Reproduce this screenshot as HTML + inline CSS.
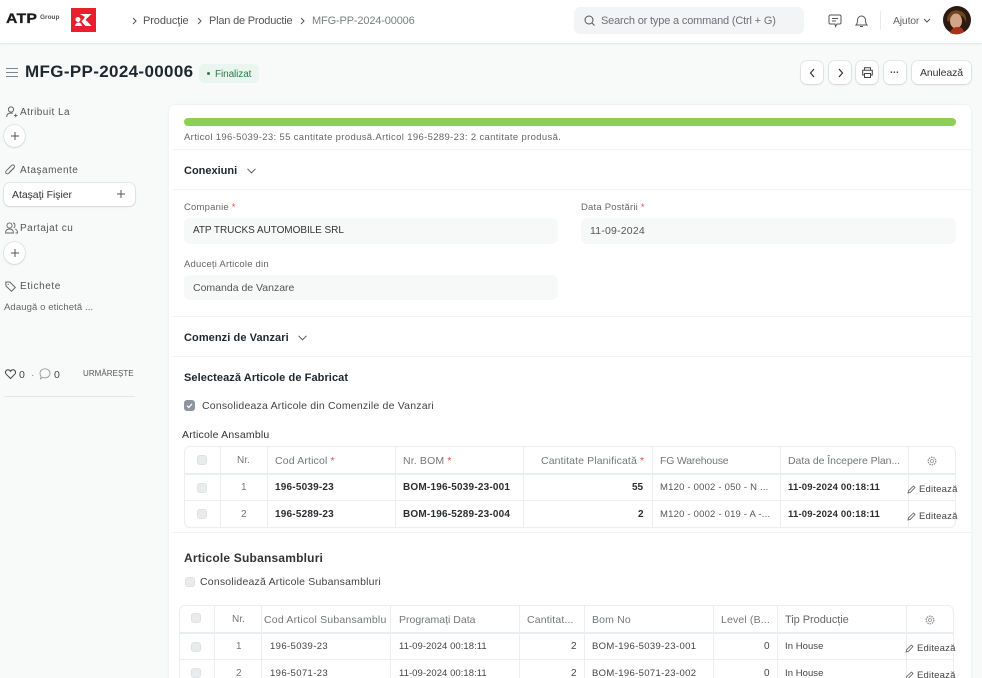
<!DOCTYPE html>
<html><head><meta charset="utf-8">
<style>
html,body{margin:0;padding:0;width:982px;height:678px;overflow:hidden;background:#f8f9f9}
#p{position:absolute;left:0;top:0;width:982px;height:678px;overflow:hidden;background:#f8f9f9;font-family:"Liberation Sans",sans-serif;color:#383838;font-size:11px}
.t{position:absolute;white-space:nowrap;line-height:14px;transform:translateY(1px)}
.b{position:absolute;box-sizing:border-box}
svg{position:absolute;overflow:visible;fill:none}
.btn{position:absolute;box-sizing:border-box;background:#fff;border-radius:6px;box-shadow:0 0 0 1px rgba(0,0,0,.07),0 1px 2px rgba(0,0,0,.08)}
.input{position:absolute;background:#f7f8f8;border-radius:6px;box-sizing:border-box}
.line{position:absolute;height:1px;background:#f1f3f4}
.vl{position:absolute;width:1px;background:#ebeef0}
.hl{position:absolute;height:1px;background:#ebeef0}
.cb{position:absolute;width:10px;height:10px;background:#e9ebec;border:1px solid #dfe2e4;border-radius:3px;box-sizing:border-box}
.g{color:#74777b}
.s{font-weight:bold;color:#2b2d30}
.r{color:#e5484d}
</style></head><body><div id="p">

<!-- navbar -->
<div class="b" style="left:0;top:0;width:982px;height:43px;background:#fff;box-shadow:0 1px 2px rgba(0,0,0,.09)"></div>
<div class="t" style="left:6px;top:11px;font-size:13.5px;font-weight:bold;color:#1a1a1a;letter-spacing:.2px;transform:scaleX(1.17);transform-origin:left;line-height:16px;-webkit-text-stroke:.3px #1a1a1a">ATP</div>
<div class="t" style="left:40px;top:12px;font-size:6.5px;font-weight:bold;color:#555;line-height:10px">Group</div>
<div class="b" style="left:71px;top:8px;width:25px;height:24px;background:#e8202e"></div>
<svg style="left:71px;top:8px" width="25" height="24"><path d="M9 6h11.500l-6 5.800L20.500 18h-6l-4-4.500 3.500-4.500zM7 9a2.500 2.500 0 1 1-.1 0zM4 18c.7-2.500 2-3.500 3.500-3.500s3 1 3.500 3.500z" fill="#fff"/></svg>

<svg style="left:132px;top:17px" width="6" height="8"><path d="M1 1l3 3-3 3" stroke="#555" stroke-width="1"/></svg>
<div class="t" style="left:143px;top:13px;font-size:11px;color:#555;letter-spacing:-.1px">Producţie</div>
<svg style="left:197px;top:17px" width="6" height="8"><path d="M1 1l3 3-3 3" stroke="#555" stroke-width="1"/></svg>
<div class="t" style="left:209px;top:13px;font-size:11px;color:#555;letter-spacing:-.2px">Plan de Productie</div>
<svg style="left:300px;top:17px" width="6" height="8"><path d="M1 1l3 3-3 3" stroke="#555" stroke-width="1"/></svg>
<div class="t" style="left:312px;top:13px;font-size:11px;color:#7c7f83;letter-spacing:-.15px">MFG-PP-2024-00006</div>

<div class="b" style="left:574px;top:7px;width:230px;height:27px;background:#f3f4f5;border-radius:6px"></div>
<svg style="left:584px;top:15px" width="12" height="12"><circle cx="5" cy="5" r="4" stroke="#555" stroke-width="1"/><path d="M8 8l2.500 2.500" stroke="#555"/></svg>
<div class="t" style="left:601px;top:13px;font-size:11px;color:#6d7075;letter-spacing:-.17px">Search or type a command (Ctrl + G)</div>

<svg style="left:828px;top:14px" width="14" height="14"><path d="M2 1h10a1.500 1.500 0 0 1 1 1v7a1.500 1.500 0 0 1-1 1H9l-1.500 2.500L7 10H2a1.500 1.500 0 0 1-1-1V2a1.500 1.500 0 0 1 1-1zM4 4.500h6M4 7h4" stroke="#555" stroke-width="1"/></svg>
<svg style="left:855px;top:14px" width="13" height="14"><path d="M1 11c1.500-1.500 1.500-3 1.500-5a4 4 0 0 1 8 0c0 2 0 3.500 1.500 5zM5 12.500h3" stroke="#555" stroke-width="1"/></svg>
<div class="b" style="left:880px;top:11px;width:1px;height:19px;background:#e8eaeb"></div>
<div class="t" style="left:893px;top:13px;font-size:10.500px;color:#666;letter-spacing:-.2px">Ajutor</div>
<svg style="left:923px;top:18px" width="8" height="6"><path d="M1 1l3 3 3-3" stroke="#555" stroke-width="1"/></svg>
<svg style="left:943px;top:6px" width="28" height="28"><circle cx="14" cy="14" r="14" fill="#2b1a10"/><path d="M4 12c2-7 8-9 13-7 5 1 7 6 6 12-1-4-3-7-5-7-4 1-8 0-10 3-1 2-2 3-4 2z" fill="#6b4522"/><ellipse cx="13" cy="15" rx="6" ry="7.500" fill="#d2a587"/><path d="M7 27c1-4 4-6 7-6s6 1 7 5a14 14 0 0 1-14 1z" fill="#a8321c"/></svg>

<!-- page head -->
<svg style="left:6px;top:68px" width="12" height="10"><path d="M0 .5h12M0 4.500h12M0 8.500h12" stroke="#7e8590" stroke-width="1"/></svg>
<div class="t" style="left:25px;top:61px;font-size:17px;font-weight:bold;color:#1f272e;letter-spacing:.35px;line-height:20px">MFG-PP-2024-00006</div>
<div class="b" style="left:199px;top:64px;width:60px;height:19px;background:#e9f5ee;border-radius:5px"></div>
<div class="b" style="left:207px;top:72px;width:3px;height:3px;background:#2e7a4d;border-radius:50%"></div>
<div class="t" style="left:215px;top:67px;font-size:10px;color:#2e7a4d;letter-spacing:-.1px">Finalizat</div>

<div class="btn" style="left:801px;top:61px;width:22px;height:23px"></div>
<svg style="left:809px;top:68px" width="7" height="10"><path d="M5 1L1.500 5 5 9" stroke="#333" stroke-width="1.200"/></svg>
<div class="btn" style="left:829px;top:61px;width:22px;height:23px"></div>
<svg style="left:837px;top:68px" width="7" height="10"><path d="M2 1l3.500 4L2 9" stroke="#333" stroke-width="1.200"/></svg>
<div class="btn" style="left:856px;top:61px;width:22px;height:23px"></div>
<svg style="left:862px;top:67px" width="11" height="11"><path d="M2.500 3V.7h6V3M2.500 8H.7V3.200h9.600V8H8.500M2.500 6.500h6v4h-6z" stroke="#444" stroke-width="1"/></svg>
<div class="btn" style="left:884px;top:61px;width:22px;height:23px"></div>
<div class="t" style="left:890px;top:65px;font-size:10px;font-weight:bold;color:#444;letter-spacing:.2px;line-height:10px">...</div>
<div class="btn" style="left:912px;top:61px;width:59px;height:23px"></div>
<div class="t" style="left:920px;top:65px;font-size:10.500px;color:#333;letter-spacing:-.1px">Anulează</div>

<!-- sidebar -->
<svg style="left:6px;top:106px" width="12" height="12"><circle cx="5" cy="3.500" r="2.600" stroke="#666"/><path d="M.7 11c0-3 2-4 4.300-4 .7 0 1.300.1 1.800.3M8 9.500h3.500M9.700 7.800v3.500" stroke="#666"/></svg>
<div class="t" style="left:20px;top:105px;font-size:10px;color:#555;letter-spacing:.45px">Atribuit La</div>
<div class="btn" style="left:4px;top:125px;width:21px;height:22px;border-radius:50%"></div>
<svg style="left:11px;top:132px" width="8" height="8"><path d="M4 0v8M0 4h8" stroke="#555"/></svg>

<svg style="left:5px;top:164px" width="11" height="11"><path d="M9.500 3.500L4 9c-1 1-2.500 1-3 .3S.6 7.500 1.500 6.500L6.500 1.500c.8-.8 2-.8 2.600-.1.600.6.500 1.700-.2 2.400L4.300 8.300" stroke="#666" stroke-width=".9"/></svg>
<div class="t" style="left:20px;top:163px;font-size:10px;color:#555;letter-spacing:.5px">Ataşamente</div>
<div class="btn" style="left:4px;top:183px;width:131px;height:23px"></div>
<div class="t" style="left:12px;top:187px;font-size:10.500px;color:#333;letter-spacing:-.05px">Ataşaţi Fişier</div>
<svg style="left:117px;top:190px" width="8" height="8"><path d="M4 0v8M0 4h8" stroke="#555"/></svg>

<svg style="left:5px;top:222px" width="13" height="12"><circle cx="4.500" cy="3.500" r="2.600" stroke="#666" stroke-width=".9"/><path d="M.6 11c0-3 1.600-4 3.900-4s3.900 1 3.900 4zM8 1c2 0 2.800 3.500.7 5M10 7c1.500.4 2.500 1.500 2.500 4H10.500" stroke="#666" stroke-width=".9"/></svg>
<div class="t" style="left:20px;top:221px;font-size:10px;color:#555;letter-spacing:.5px">Partajat cu</div>
<div class="btn" style="left:4px;top:242px;width:21px;height:22px;border-radius:50%"></div>
<svg style="left:11px;top:249px" width="8" height="8"><path d="M4 0v8M0 4h8" stroke="#555"/></svg>

<svg style="left:5px;top:281px" width="11" height="11"><path d="M.8 1h4l5.500 5.500-3.800 3.800L1 5z" stroke="#666"/><circle cx="3.200" cy="3.300" r=".6" fill="#666"/></svg>
<div class="t" style="left:20px;top:279px;font-size:10px;color:#555;letter-spacing:.6px">Etichete</div>
<div class="t" style="left:4px;top:300px;font-size:9.500px;color:#666;letter-spacing:.1px">Adaugă o etichetă ...</div>

<svg style="left:5px;top:369px" width="11" height="10"><path d="M5.500 9.500L1.200 5.200C-.2 3.700.5.800 3 .8c1.200 0 2 .7 2.500 1.500C6 1.500 6.800.8 8 .8c2.500 0 3.200 2.900 1.800 4.400z" stroke="#444"/></svg>
<div class="t" style="left:19px;top:367px;font-size:10.500px;color:#444">0</div>
<div class="t" style="left:31px;top:367px;font-size:10.500px;color:#888">·</div>
<svg style="left:39px;top:368px" width="12" height="12"><path d="M6 .8c3 0 5 2 5 4.500s-2 4.500-5 4.500c-.8 0-1.500-.1-2.100-.4L1.500 10.800l.6-2.300C1.300 7.700 1 6.500 1 5.300 1 2.800 3 .8 6 .8z" stroke="#999" stroke-width=".9"/></svg>
<div class="t" style="left:54px;top:367px;font-size:10.500px;color:#444">0</div>
<div class="t" style="left:83px;top:366px;font-size:8px;color:#555;letter-spacing:.05px">URMĂREȘTE</div>
<div class="b" style="left:4px;top:396px;width:131px;height:1px;background:#e2e4e6"></div>

<!-- card -->
<div class="b" style="left:169px;top:105px;width:802px;height:580px;background:#fff;border-radius:6px;box-shadow:0 0 2px rgba(0,0,0,.08)"></div>
<div class="b" style="left:184px;top:118px;width:772px;height:8px;background:#8ccf54;border-radius:4px"></div>
<div class="t" style="left:184px;top:130px;font-size:9.500px;color:#666;letter-spacing:.345px">Articol 196-5039-23: 55 cantitate produsă.Articol 196-5289-23: 2 cantitate produsă.</div>
<div class="line" style="left:173px;top:149px;width:798px"></div>

<div class="t" style="left:184px;top:163px;font-size:11px;font-weight:bold;color:#1f272e;letter-spacing:0">Conexiuni</div>
<svg style="left:247px;top:168px" width="9" height="6"><path d="M.5.800L4.500 4.800 8.500.800" stroke="#555"/></svg>
<div class="line" style="left:173px;top:189px;width:798px"></div>

<div class="t" style="left:184px;top:200px;font-size:9.500px;color:#666;letter-spacing:.2px">Companie <span class="r">*</span></div>
<div class="input" style="left:184px;top:218px;width:374px;height:26px"></div>
<div class="t" style="left:193px;top:223px;font-size:10px;color:#333;letter-spacing:-.05px">ATP TRUCKS AUTOMOBILE SRL</div>
<div class="t" style="left:581px;top:200px;font-size:9.500px;color:#666;letter-spacing:.2px">Data Postării <span class="r">*</span></div>
<div class="input" style="left:581px;top:218px;width:375px;height:26px"></div>
<div class="t" style="left:590px;top:223px;font-size:10.500px;color:#555;letter-spacing:.2px">11-09-2024</div>
<div class="t" style="left:184px;top:257px;font-size:9.500px;color:#666;letter-spacing:.2px">Aduceți Articole din</div>
<div class="input" style="left:184px;top:275px;width:374px;height:25px"></div>
<div class="t" style="left:193px;top:280px;font-size:10.500px;color:#555;letter-spacing:0">Comanda de Vanzare</div>
<div class="line" style="left:173px;top:316px;width:798px"></div>

<div class="t" style="left:184px;top:330px;font-size:11px;font-weight:bold;color:#1f272e;letter-spacing:.08px">Comenzi de Vanzari</div>
<svg style="left:298px;top:335px" width="9" height="6"><path d="M.5.800L4.500 4.800 8.500.800" stroke="#555"/></svg>
<div class="line" style="left:173px;top:356px;width:798px"></div>

<div class="t" style="left:184px;top:370px;font-size:11px;font-weight:bold;color:#1f272e;letter-spacing:.08px">Selectează Articole de Fabricat</div>
<div class="b" style="left:184px;top:400px;width:11px;height:11px;background:#8e959c;border-radius:3px"></div>
<svg style="left:184px;top:400px" width="11" height="11"><path d="M3 5.700l1.800 1.800L8 3.800" stroke="#fff" stroke-width="1.200"/></svg>
<div class="t" style="left:202px;top:398px;font-size:10.500px;color:#444;letter-spacing:.2px">Consolideaza Articole din Comenzile de Vanzari</div>

<div class="t" style="left:182px;top:427px;font-size:10.500px;color:#333;letter-spacing:.2px">Articole Ansamblu</div>

<!-- table 1 -->
<div class="b" style="left:184px;top:446px;width:772px;height:82px;border:1px solid #ebeef0;border-radius:6px"></div>
<div class="hl" style="left:185px;top:473px;width:770px;height:2px"></div>
<div class="hl" style="left:185px;top:500px;width:770px"></div>
<div class="vl" style="left:220px;top:447px;height:80px"></div>
<div class="vl" style="left:267px;top:447px;height:80px"></div>
<div class="vl" style="left:395px;top:447px;height:80px"></div>
<div class="vl" style="left:523px;top:447px;height:80px"></div>
<div class="vl" style="left:652px;top:447px;height:80px"></div>
<div class="vl" style="left:780px;top:447px;height:80px"></div>
<div class="vl" style="left:908px;top:447px;height:80px"></div>

<div class="cb" style="left:197px;top:455px"></div>
<div class="t g" style="left:237px;top:453px;font-size:10px">Nr.</div>
<div class="t g" style="left:275px;top:453px;font-size:10.500px;letter-spacing:.15px">Cod Articol <span class="r">*</span></div>
<div class="t g" style="left:403px;top:453px;font-size:10.500px;letter-spacing:.15px">Nr. BOM <span class="r">*</span></div>
<div class="t g" style="left:541px;top:453px;font-size:10.500px;letter-spacing:.12px">Cantitate Planificată <span class="r">*</span></div>
<div class="t g" style="left:660px;top:453px;font-size:10.500px;letter-spacing:-.2px">FG Warehouse</div>
<div class="t g" style="left:788px;top:453px;font-size:10.500px;letter-spacing:-.05px">Data de Începere Plan...</div>
<svg style="left:927px;top:456px" width="10" height="10"><circle cx="5" cy="5" r="1.500" stroke="#8b8f94" stroke-width=".8"/><circle cx="5" cy="5" r="3.800" stroke="#8b8f94" stroke-width="1.300" stroke-dasharray="1.500 .9"/></svg>

<div class="cb" style="left:197px;top:483px"></div>
<div class="t g" style="left:241px;top:480px;font-size:10px">1</div>
<div class="t s" style="left:275px;top:480px;font-size:10px;letter-spacing:.2px">196-5039-23</div>
<div class="t s" style="left:403px;top:480px;font-size:10px;letter-spacing:.2px">BOM-196-5039-23-001</div>
<div class="t s" style="left:632px;top:480px;font-size:10px">55</div>
<div class="t" style="left:660px;top:480px;font-size:9.500px;color:#555;letter-spacing:.2px">M120 - 0002 - 050 - N ...</div>
<div class="t s" style="left:788px;top:480px;font-size:9.500px;letter-spacing:.2px">11-09-2024 00:18:11</div>
<svg style="left:907px;top:485px" width="9" height="9"><path d="M1 8l.5-2.200L6.500 1 8 2.500 3.200 7.500z" stroke="#555" stroke-width=".8"/></svg>
<div class="t" style="left:919px;top:482px;font-size:9.500px;color:#444;letter-spacing:.2px">Editează</div>

<div class="cb" style="left:197px;top:509px"></div>
<div class="t g" style="left:241px;top:507px;font-size:10px">2</div>
<div class="t s" style="left:275px;top:507px;font-size:10px;letter-spacing:.2px">196-5289-23</div>
<div class="t s" style="left:403px;top:507px;font-size:10px;letter-spacing:.2px">BOM-196-5289-23-004</div>
<div class="t s" style="left:638px;top:507px;font-size:10px">2</div>
<div class="t" style="left:660px;top:507px;font-size:9.500px;color:#555;letter-spacing:.2px">M120 - 0002 - 019 - A -...</div>
<div class="t s" style="left:788px;top:507px;font-size:9.500px;letter-spacing:.2px">11-09-2024 00:18:11</div>
<svg style="left:907px;top:512px" width="9" height="9"><path d="M1 8l.5-2.200L6.500 1 8 2.500 3.200 7.500z" stroke="#555" stroke-width=".8"/></svg>
<div class="t" style="left:919px;top:509px;font-size:9.500px;color:#444;letter-spacing:.2px">Editează</div>
<div class="line" style="left:173px;top:532px;width:798px"></div>

<!-- subansambluri -->
<div class="t" style="left:184px;top:550px;font-size:12px;font-weight:bold;color:#333;letter-spacing:.2px">Articole Subansambluri</div>
<div class="cb" style="left:185px;top:577px"></div>
<div class="t" style="left:200px;top:574px;font-size:10.500px;color:#444;letter-spacing:.2px">Consolidează Articole Subansambluri</div>

<div class="b" style="left:179px;top:605px;width:775px;height:90px;border:1px solid #ebeef0;border-radius:6px"></div>
<div class="hl" style="left:180px;top:632px;width:773px;height:2px"></div>
<div class="hl" style="left:180px;top:659px;width:773px"></div>
<div class="vl" style="left:214px;top:606px;height:72px"></div>
<div class="vl" style="left:261px;top:606px;height:72px"></div>
<div class="vl" style="left:390px;top:606px;height:72px"></div>
<div class="vl" style="left:519px;top:606px;height:72px"></div>
<div class="vl" style="left:584px;top:606px;height:72px"></div>
<div class="vl" style="left:713px;top:606px;height:72px"></div>
<div class="vl" style="left:777px;top:606px;height:72px"></div>
<div class="vl" style="left:906px;top:606px;height:72px"></div>

<div class="cb" style="left:191px;top:613px"></div>
<div class="t g" style="left:232px;top:612px;font-size:10px">Nr.</div>
<div class="t g" style="left:264px;top:612px;font-size:10.500px;letter-spacing:.2px">Cod Articol Subansamblu</div>
<div class="t g" style="left:399px;top:612px;font-size:10.500px;letter-spacing:0">Programați Data</div>
<div class="t g" style="left:527px;top:612px;font-size:10.500px;letter-spacing:.15px">Cantitat...</div>
<div class="t g" style="left:592px;top:612px;font-size:10.500px;letter-spacing:.15px">Bom No</div>
<div class="t g" style="left:721px;top:612px;font-size:10.500px;letter-spacing:.15px">Level (B...</div>
<div class="t" style="left:785px;top:612px;font-size:11px;color:#666;letter-spacing:-.05px">Tip Producție</div>
<svg style="left:925px;top:615px" width="10" height="10"><circle cx="5" cy="5" r="1.500" stroke="#8b8f94" stroke-width=".8"/><circle cx="5" cy="5" r="3.800" stroke="#8b8f94" stroke-width="1.300" stroke-dasharray="1.500 .9"/></svg>

<div class="cb" style="left:191px;top:642px"></div>
<div class="t g" style="left:236px;top:639px;font-size:10px">1</div>
<div class="t" style="left:270px;top:639px;font-size:9.500px;color:#444;letter-spacing:.38px">196-5039-23</div>
<div class="t" style="left:399px;top:639px;font-size:9.500px;color:#444;letter-spacing:.05px">11-09-2024 00:18:11</div>
<div class="t" style="left:571px;top:639px;font-size:10px;color:#444">2</div>
<div class="t" style="left:592px;top:639px;font-size:9.500px;color:#444;letter-spacing:.35px">BOM-196-5039-23-001</div>
<div class="t" style="left:764px;top:639px;font-size:10px;color:#444">0</div>
<div class="t" style="left:785px;top:639px;font-size:9.500px;color:#444;letter-spacing:.05px">In House</div>
<svg style="left:905px;top:644px" width="9" height="9"><path d="M1 8l.5-2.200L6.500 1 8 2.500 3.200 7.500z" stroke="#555" stroke-width=".8"/></svg>
<div class="t" style="left:917px;top:641px;font-size:9.500px;color:#444;letter-spacing:.2px">Editează</div>

<div class="cb" style="left:191px;top:668px"></div>
<div class="t g" style="left:236px;top:666px;font-size:10px">2</div>
<div class="t" style="left:270px;top:666px;font-size:9.500px;color:#444;letter-spacing:.38px">196-5071-23</div>
<div class="t" style="left:399px;top:666px;font-size:9.500px;color:#444;letter-spacing:.05px">11-09-2024 00:18:11</div>
<div class="t" style="left:571px;top:666px;font-size:10px;color:#444">2</div>
<div class="t" style="left:592px;top:666px;font-size:9.500px;color:#444;letter-spacing:.35px">BOM-196-5071-23-002</div>
<div class="t" style="left:764px;top:666px;font-size:10px;color:#444">0</div>
<div class="t" style="left:785px;top:666px;font-size:9.500px;color:#444;letter-spacing:.05px">In House</div>
<svg style="left:905px;top:671px" width="9" height="9"><path d="M1 8l.5-2.200L6.500 1 8 2.500 3.200 7.500z" stroke="#555" stroke-width=".8"/></svg>
<div class="t" style="left:917px;top:668px;font-size:9.500px;color:#444;letter-spacing:.2px">Editează</div>

</div></body></html>
